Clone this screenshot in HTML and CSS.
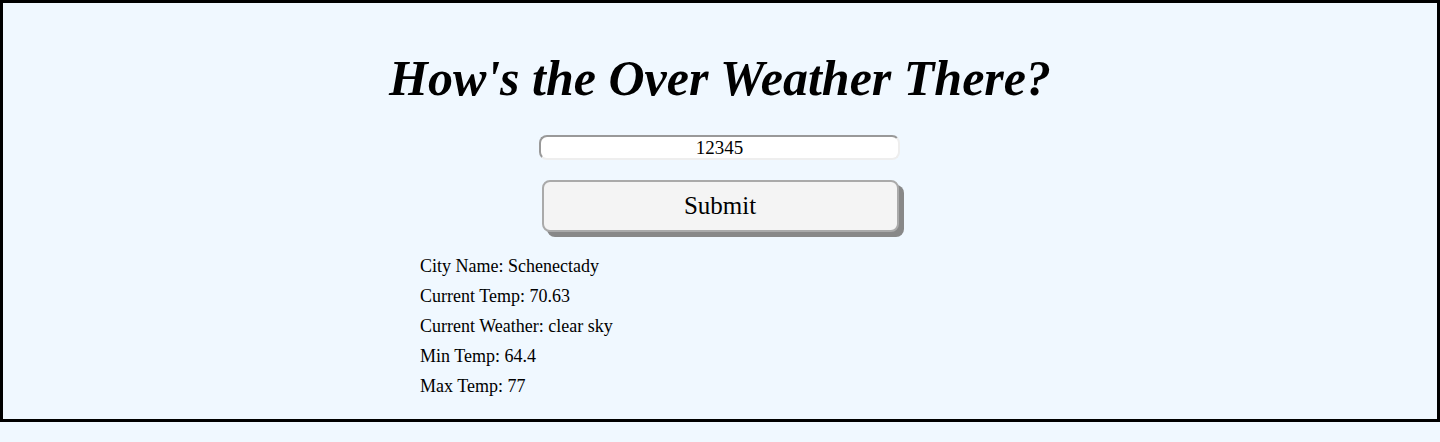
FILE: index.html
```html
<!DOCTYPE html>
<html>
<head>
<meta charset="utf-8">
<link rel="stylesheet" href="styles.css">
</head>
<body>
<div class="frame">
  <h1 class="title">How's the Over Weather There?</h1>
  <form class="form">
    <input class="zip" type="text" value="12345">
    <button class="submit" type="button">Submit</button>
  </form>
  <div class="results">
    <div class="row">City Name: Schenectady</div>
    <div class="row">Current Temp: 70.63</div>
    <div class="row">Current Weather: clear sky</div>
    <div class="row">Min Temp: 64.4</div>
    <div class="row">Max Temp: 77</div>
  </div>
</div>
</body>
</html>
```

FILE: styles.css
```css
html, body {
  margin: 0;
  padding: 0;
  background: #f0f8ff;
  font-family: "Liberation Serif", "Times New Roman", serif;
  color: #000;
}
.frame {
  height: 416px;
  border: 3px solid #000;
  display: flex;
  flex-direction: column;
  align-items: center;
}
.title {
  margin: 45px 0 0 0;
  font-size: 50px;
  line-height: 60px;
  font-weight: bold;
  font-style: italic;
}
.form {
  margin-top: 27px;
  display: flex;
  flex-direction: column;
  align-items: center;
}
.zip {
  box-sizing: border-box;
  width: 361px;
  height: 25px;
  margin: 0 0 0 -1px;
  padding: 0;
  border: 2px solid;
  border-color: #999 #eee #eee #999;
  border-radius: 8px;
  background: #fff;
  text-align: center;
  font-family: "Liberation Serif", "Times New Roman", serif;
  font-size: 19px;
  color: #000;
  outline: none;
}
.submit {
  box-sizing: border-box;
  width: 357px;
  height: 52px;
  margin-top: 20px;
  border: 2px solid #aaa;
  border-radius: 8px;
  background: #f4f4f4;
  box-shadow: 5px 5px 0 #888;
  font-family: "Liberation Serif", "Times New Roman", serif;
  font-size: 25px;
  color: #000;
  padding: 0;
}
.results {
  width: 600px;
  margin-top: 24px;
  display: flex;
  flex-direction: column;
  gap: 10px;
  font-size: 18px;
  line-height: 20px;
}
```
